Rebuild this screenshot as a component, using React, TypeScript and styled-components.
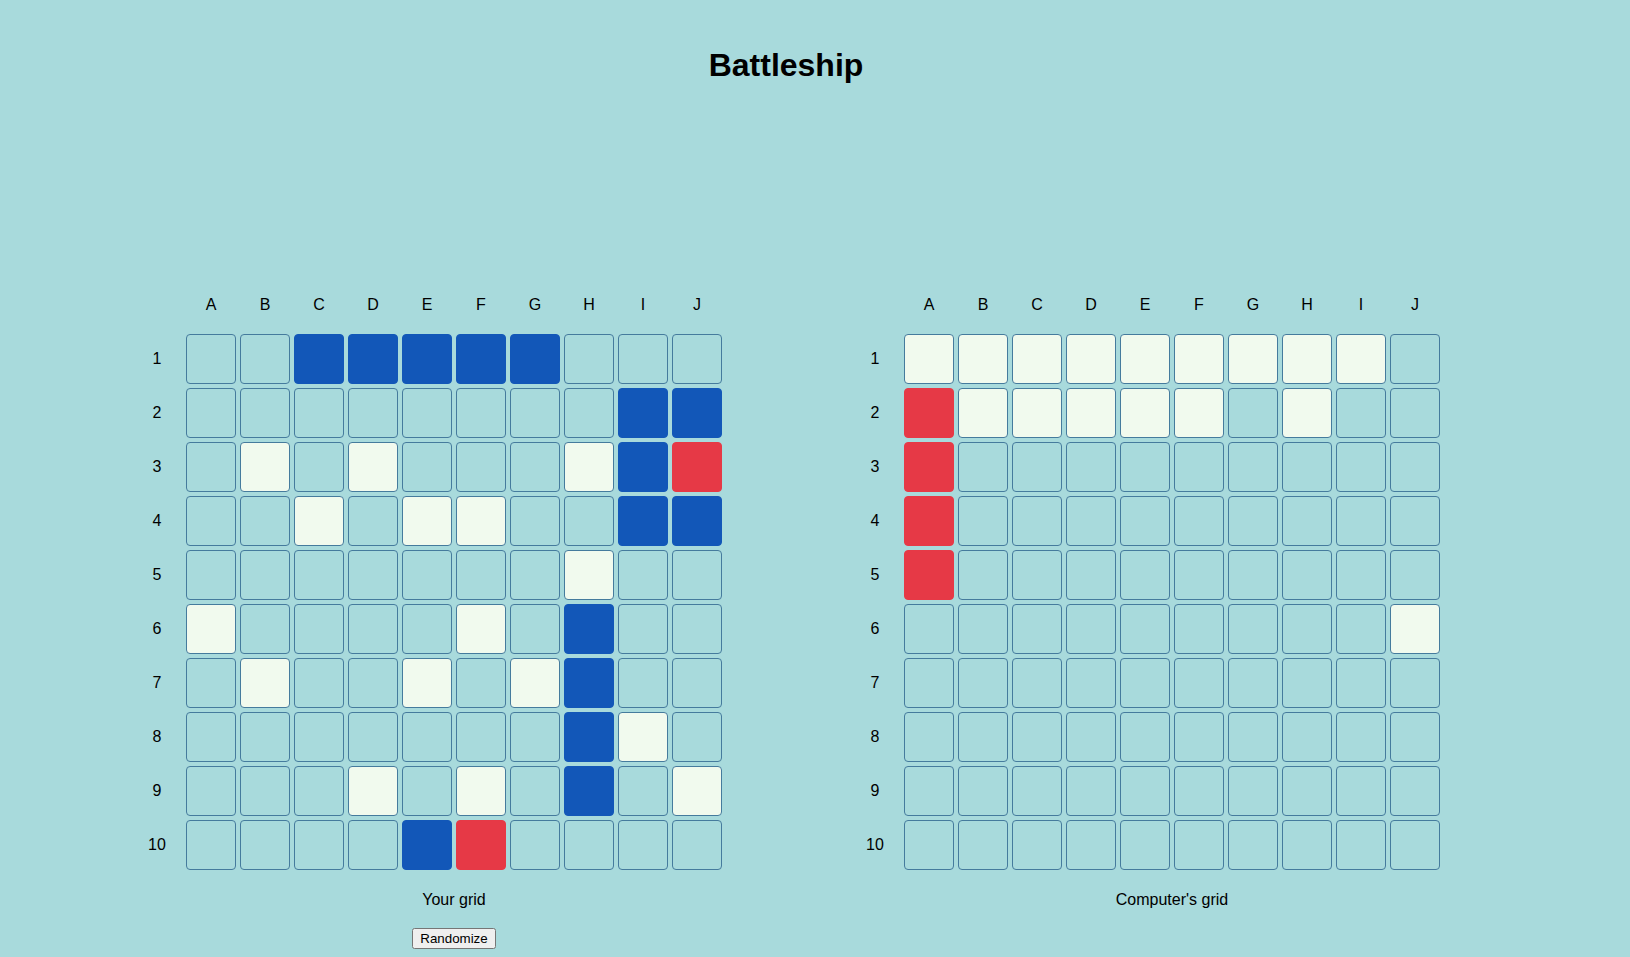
import React from "react";
import styled, { createGlobalStyle } from "styled-components";

const GlobalStyle = createGlobalStyle`
  html, body {
    margin: 0;
    padding: 0;
    background: #a8dadc;
    font-family: "Liberation Sans", Arial, sans-serif;
    color: #000;
  }
`;

const Page = styled.div`
  width: 1308px;
  margin-left: 132px;
  display: flex;
  flex-direction: column;
`;

const Title = styled.h1`
  margin: 47px 0 0;
  font-size: 32px;
  line-height: 36px;
  font-weight: 700;
  text-align: center;
`;

const Boards = styled.div`
  margin-top: 197px;
  display: flex;
  gap: 128px;
`;

const Board = styled.div`
  width: 590px;
  display: flex;
  flex-direction: column;
`;

const Grid = styled.div`
  display: grid;
  grid-template-columns: repeat(11, 50px);
  grid-auto-rows: 50px;
  gap: 4px;
`;

const Label = styled.div`
  display: flex;
  align-items: center;
  justify-content: center;
  font-size: 16px;
`;

type CellState = "empty" | "ship" | "miss" | "hit";

const cellColors: Record<CellState, { bg: string; border: string }> = {
  empty: { bg: "#a8dadc", border: "#457b9d" },
  ship: { bg: "#1257b8", border: "#1257b8" },
  miss: { bg: "#f1faee", border: "#457b9d" },
  hit: { bg: "#e63946", border: "#e63946" },
};

const Cell = styled.div<{ $state: CellState }>`
  box-sizing: border-box;
  width: 50px;
  height: 50px;
  border-radius: 4px;
  border: 1px solid ${(p) => cellColors[p.$state].border};
  background: ${(p) => cellColors[p.$state].bg};
`;

const Footer = styled.div`
  margin-left: 54px;
  width: 536px;
  display: flex;
  flex-direction: column;
  align-items: center;
`;

const Caption = styled.div`
  margin-top: 21px;
  font-size: 16px;
  line-height: 18px;
`;

const Button = styled.button`
  margin-top: 19px;
  font: 13.3333px "Liberation Sans", Arial, sans-serif;
`;

const COLS = ["A", "B", "C", "D", "E", "F", "G", "H", "I", "J"];

// legend: . empty, S ship, o miss, X hit
const yourGrid = [
  "..SSSSS...",
  "........SS",
  ".o.o...oSX",
  "..o.oo..SS",
  ".......o..",
  "o....o.S..",
  ".o..o.oS..",
  ".......So.",
  "...o.o.S.o",
  "....SX....",
];

const computerGrid = [
  "ooooooooo.",
  "Xooooo.o..",
  "X.........",
  "X.........",
  "X.........",
  ".........o",
  "..........",
  "..........",
  "..........",
  "..........",
];

const toState = (c: string): CellState =>
  c === "S" ? "ship" : c === "o" ? "miss" : c === "X" ? "hit" : "empty";

function BoardView({ rows, caption, withButton }: { rows: string[]; caption: string; withButton?: boolean }) {
  return (
    <Board>
      <Grid>
        <Label />
        {COLS.map((c) => (
          <Label key={c}>{c}</Label>
        ))}
        {rows.map((row, r) => (
          <React.Fragment key={r}>
            <Label>{r + 1}</Label>
            {row.split("").map((ch, i) => (
              <Cell key={i} $state={toState(ch)} />
            ))}
          </React.Fragment>
        ))}
      </Grid>
      <Footer>
        <Caption>{caption}</Caption>
        {withButton && <Button>Randomize</Button>}
      </Footer>
    </Board>
  );
}

export default function App() {
  return (
    <>
      <GlobalStyle />
      <Page>
        <Title>Battleship</Title>
        <Boards>
          <BoardView rows={yourGrid} caption="Your grid" withButton />
          <BoardView rows={computerGrid} caption="Computer's grid" />
        </Boards>
      </Page>
    </>
  );
}
